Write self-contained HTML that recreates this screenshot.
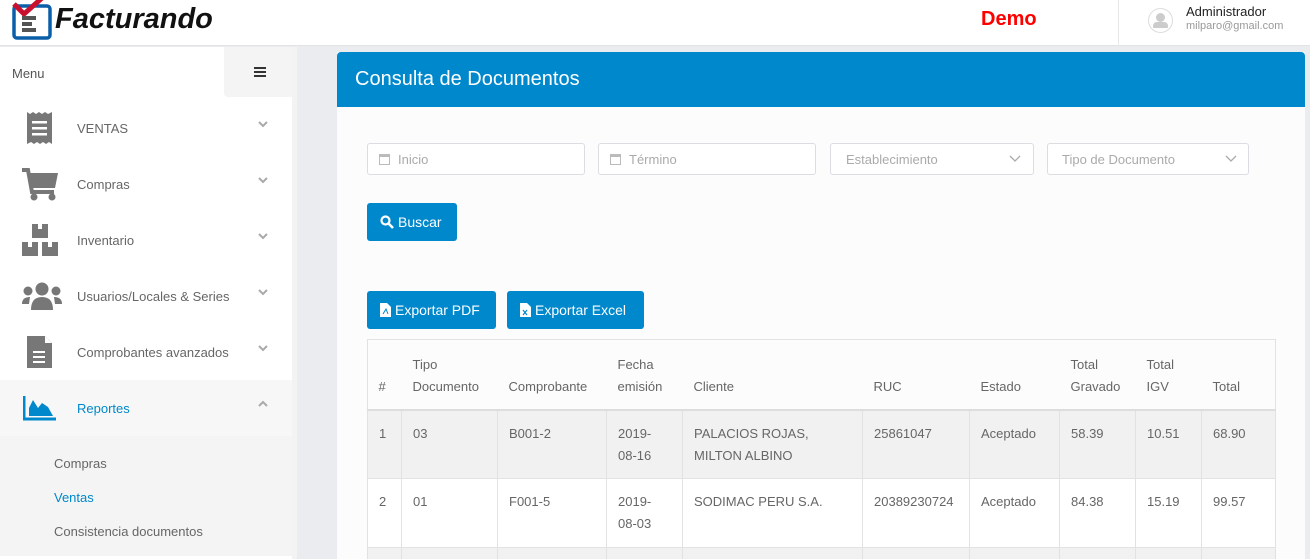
<!DOCTYPE html>
<html style="width:1310px;height:559px;overflow:hidden"><head><meta charset="utf-8"><style>
*{box-sizing:border-box;margin:0;padding:0}
body{width:1310px;height:559px;overflow:hidden;background:#ebecef;font-family:"Liberation Sans",sans-serif;color:#666;position:relative}
.hdr{position:absolute;left:0;top:0;width:1310px;height:46px;background:#fff;border-bottom:1px solid #e3e3e3}
.side{position:absolute;left:0;top:47px;width:292px;height:512px;background:#fff}
.strip{position:absolute;left:292px;top:47px;width:5px;height:512px;background:#f3f3f3}
.abs{position:absolute}
.mi{position:absolute;left:0;width:292px;height:56px}
.mi span{position:absolute;left:77px;top:21px;font-size:13px;color:#666}
.mi svg.ic{position:absolute}
.chev{position:absolute;left:258px;top:19px;width:10px;height:10px}
.inp{position:absolute;top:143px;height:32px;background:#fff;border:1px solid #dcdde2;border-radius:3px;font-size:13px;color:#aaa;padding:8px 0 0 30px}
.btn{position:absolute;background:#0088cc;color:#fff;border-radius:3px;font-size:14px}
.clip{position:absolute;left:0;top:0;width:1310px;height:559px;overflow:hidden}
table{position:absolute;left:367px;top:339px;width:909px;border-collapse:collapse;font-size:13px;color:#666}
td,th{border:1px solid #e2e2e2;text-align:left;vertical-align:top;font-weight:normal;padding:12px 10px 0 11px;line-height:22px}
th{vertical-align:bottom;padding-bottom:11px;height:70px;border-bottom:2px solid #ddd;border-left:none;border-right:none}
tr.r td{height:69px}
</style></head><body><div class="clip">
<div class="hdr">
 <svg class="abs" style="left:12px;top:0" width="42" height="40" viewBox="0 0 42 40">
  <rect x="2" y="6" width="36" height="32" rx="3" fill="none" stroke="#0a5fa8" stroke-width="3.5"/>
  <path d="M2 4 L12 14 L30 -2" stroke="#c8102e" stroke-width="5" fill="none"/>
  <rect x="10" y="16" width="14" height="4" fill="#555"/><rect x="10" y="22" width="10" height="4" fill="#555"/><rect x="10" y="28" width="14" height="4" fill="#555"/>
 </svg>
 <div class="abs" style="left:55px;top:3px;font-size:29px;font-weight:bold;font-style:italic;color:#111">Facturando</div>
 <div class="abs" style="left:981px;top:8px;font-size:20px;font-weight:bold;color:#f00">Demo</div>
 <div class="abs" style="left:1118px;top:0;width:1px;height:46px;background:#e8e8e8"></div>
 <div class="abs" style="left:1148px;top:8px;width:25px;height:25px;border-radius:50%;border:1px solid #ddd;background:#fff"></div>
 <div class="abs" style="left:1156px;top:13px;width:9px;height:9px;border-radius:50%;background:#ccc"></div>
 <div class="abs" style="left:1153px;top:22px;width:15px;height:6px;border-radius:4px 4px 1px 1px;background:#ccc"></div>
 <div class="abs" style="left:1186px;top:4px;font-size:13px;color:#222">Administrador</div>
 <div class="abs" style="left:1186px;top:20px;font-size:11px;color:#999">milparo@gmail.com</div>
</div>
<div class="side"></div><div class="strip"></div>
<div class="abs" style="left:12px;top:66px;font-size:13px;color:#555">Menu</div>
<div class="abs" style="left:224px;top:47px;width:68px;height:50px;background:#f4f4f4;border-radius:0 0 0 4px"></div>
<div class="abs" style="left:254px;top:67px;width:12px;height:2px;background:#333;box-shadow:0 4px 0 #333,0 8px 0 #333"></div>

<div class="mi" style="top:100px"><svg class="ic" style="left:27px;top:12px" width="25" height="32"><path d="M0 0 L3 2 L6 0 L9 2 L12 0 L15 2 L18 0 L21 2 L25 0 V32 L22 30 L19 32 L16 30 L13 32 L10 30 L7 32 L4 30 L0 32Z" fill="#777"/><rect x="5" y="9" width="15" height="2.5" fill="#fff"/><rect x="5" y="15" width="15" height="2.5" fill="#fff"/><rect x="5" y="21" width="15" height="2.5" fill="#fff"/></svg><span>VENTAS</span><svg class="chev" viewBox="0 0 10 10"><path d="M1 3 L5 7 L9 3" stroke="#aaa" stroke-width="2" fill="none"/></svg></div>
<div class="mi" style="top:156px"><svg class="ic" style="left:22px;top:12px" width="37" height="33"><path d="M0 2 H6 L10 24 H32" stroke="#777" stroke-width="4" fill="none"/><path d="M7 5 H36 L33 20 H10Z" fill="#777"/><circle cx="12" cy="29" r="3.5" fill="#777"/><circle cx="30" cy="29" r="3.5" fill="#777"/></svg><span>Compras</span><svg class="chev" viewBox="0 0 10 10"><path d="M1 3 L5 7 L9 3" stroke="#aaa" stroke-width="2" fill="none"/></svg></div>
<div class="mi" style="top:212px"><svg class="ic" style="left:22px;top:12px" width="37" height="33"><rect x="10" y="0" width="16" height="14" fill="#777"/><rect x="0" y="18" width="16" height="14" fill="#777"/><rect x="20" y="18" width="16" height="14" fill="#777"/><rect x="16" y="0" width="4" height="5" fill="#fff"/><rect x="6" y="18" width="4" height="5" fill="#fff"/><rect x="26" y="18" width="4" height="5" fill="#fff"/></svg><span>Inventario</span><svg class="chev" viewBox="0 0 10 10"><path d="M1 3 L5 7 L9 3" stroke="#aaa" stroke-width="2" fill="none"/></svg></div>
<div class="mi" style="top:268px"><svg class="ic" style="left:22px;top:14px" width="40" height="30"><circle cx="20" cy="7" r="6.5" fill="#777"/><circle cx="6" cy="9" r="4.5" fill="#777"/><circle cx="34" cy="9" r="4.5" fill="#777"/><path d="M9 28 Q9 15 20 15 Q31 15 31 28Z" fill="#777"/><path d="M0 22 Q0 15 8 15 L7 22Z M40 22 Q40 15 32 15 L33 22Z" fill="#777"/></svg><span>Usuarios/Locales &amp; Series</span><svg class="chev" viewBox="0 0 10 10"><path d="M1 3 L5 7 L9 3" stroke="#aaa" stroke-width="2" fill="none"/></svg></div>
<div class="mi" style="top:324px"><svg class="ic" style="left:27px;top:12px" width="25" height="33"><path d="M0 0 H18 L25 7 V32 H0Z" fill="#777"/><path d="M18 0 V7 H25" fill="#fff"/><rect x="6" y="15" width="12" height="2" fill="#fff"/><rect x="6" y="20" width="12" height="2" fill="#fff"/><rect x="6" y="25" width="12" height="2" fill="#fff"/></svg><span>Comprobantes avanzados</span><svg class="chev" viewBox="0 0 10 10"><path d="M1 3 L5 7 L9 3" stroke="#aaa" stroke-width="2" fill="none"/></svg></div>
<div class="mi" style="top:380px;background:#f7f7f7"><svg class="ic" style="left:23px;top:16px" width="34" height="25"><path d="M1 0 V23 H33" stroke="#0088cc" stroke-width="3" fill="none"/><path d="M6 20 L6 12 L10 4 L15 12 L19 7 L25 11 L30 20Z" fill="#0088cc"/></svg><span style="color:#0088cc">Reportes</span><svg class="chev" viewBox="0 0 10 10"><path d="M1 7 L5 3 L9 7" stroke="#aaa" stroke-width="2" fill="none"/></svg></div>
<div class="abs" style="left:0;top:436px;width:292px;height:120px;background:#f4f4f4"></div>
<div class="abs" style="left:54px;top:456px;font-size:13px;color:#666">Compras</div>
<div class="abs" style="left:54px;top:490px;font-size:13px;color:#0088cc">Ventas</div>
<div class="abs" style="left:54px;top:524px;font-size:13px;color:#666">Consistencia documentos</div>

<div class="abs" style="left:337px;top:52px;width:968px;height:507px;background:#fcfcfc"></div>
<div class="abs" style="left:337px;top:52px;width:968px;height:55px;background:#0088cc;border-radius:4px 4px 0 0;color:#fff;font-size:20px;padding:16px 0 0 18px">Consulta de Documentos</div>

<div class="inp" style="left:367px;width:218px">Inicio</div>
<div class="inp" style="left:598px;width:218px">Término</div>
<div class="inp" style="left:830px;width:204px;padding-left:15px">Establecimiento</div>
<div class="inp" style="left:1047px;width:202px;padding-left:14px">Tipo de Documento</div>
<svg class="abs" style="left:379px;top:153px" width="11" height="12"><rect x="0.5" y="1.5" width="10" height="10" fill="none" stroke="#bbb"/><rect x="0" y="1" width="11" height="3" fill="#bbb"/></svg>
<svg class="abs" style="left:610px;top:153px" width="11" height="12"><rect x="0.5" y="1.5" width="10" height="10" fill="none" stroke="#bbb"/><rect x="0" y="1" width="11" height="3" fill="#bbb"/></svg>
<svg class="abs" style="left:1009px;top:155px" width="12" height="8"><path d="M1 1 L6 6 L11 1" stroke="#aaa" fill="none" stroke-width="1.3"/></svg>
<svg class="abs" style="left:1225px;top:155px" width="12" height="8"><path d="M1 1 L6 6 L11 1" stroke="#aaa" fill="none" stroke-width="1.3"/></svg>

<div class="btn" style="left:367px;top:203px;width:90px;height:38px;padding:11px 0 0 31px">Buscar</div>
<svg class="abs" style="left:380px;top:215px" width="14" height="14"><circle cx="5.5" cy="5.5" r="4" stroke="#fff" stroke-width="2.2" fill="none"/><path d="M8.5 8.5 L13 13" stroke="#fff" stroke-width="2.6"/></svg>
<div class="btn" style="left:367px;top:291px;width:129px;height:38px;padding:11px 0 0 28px">Exportar PDF</div>
<div class="btn" style="left:507px;top:291px;width:137px;height:38px;padding:11px 0 0 28px">Exportar Excel</div>
<svg class="abs" style="left:380px;top:303px" width="11" height="14"><path d="M0 0 H7 L11 4 V14 H0Z" fill="#fff"/><path d="M3 11 L6 6 L8 11" stroke="#0088cc" fill="none"/></svg>
<svg class="abs" style="left:520px;top:303px" width="11" height="14"><path d="M0 0 H7 L11 4 V14 H0Z" fill="#fff"/><path d="M3 7 L7 12 M7 7 L3 12" stroke="#0088cc" stroke-width="1.2"/></svg>

<div class="abs" style="left:367px;top:339px;width:909px;height:220px;border:1px solid #e2e2e2;border-bottom:none"></div>
<table>
<tr><th style="width:34px">#</th><th style="width:96px">Tipo<br>Documento</th><th style="width:109px">Comprobante</th><th style="width:76px">Fecha<br>emisión</th><th style="width:180px">Cliente</th><th style="width:107px">RUC</th><th style="width:90px">Estado</th><th style="width:76px">Total<br>Gravado</th><th style="width:66px">Total<br>IGV</th><th>Total</th></tr>
<tr class="r" style="background:#f1f1f1"><td>1</td><td>03</td><td>B001-2</td><td>2019-<br>08-16</td><td>PALACIOS ROJAS,<br>MILTON ALBINO</td><td>25861047</td><td>Aceptado</td><td>58.39</td><td>10.51</td><td>68.90</td></tr>
<tr class="r" style="background:#fff"><td>2</td><td>01</td><td>F001-5</td><td>2019-<br>08-03</td><td>SODIMAC PERU S.A.</td><td>20389230724</td><td>Aceptado</td><td>84.38</td><td>15.19</td><td>99.57</td></tr>
<tr style="background:#f1f1f1"><td style="height:12px"></td><td></td><td></td><td></td><td></td><td></td><td></td><td></td><td></td><td></td></tr>
</table>
</div></body></html>
